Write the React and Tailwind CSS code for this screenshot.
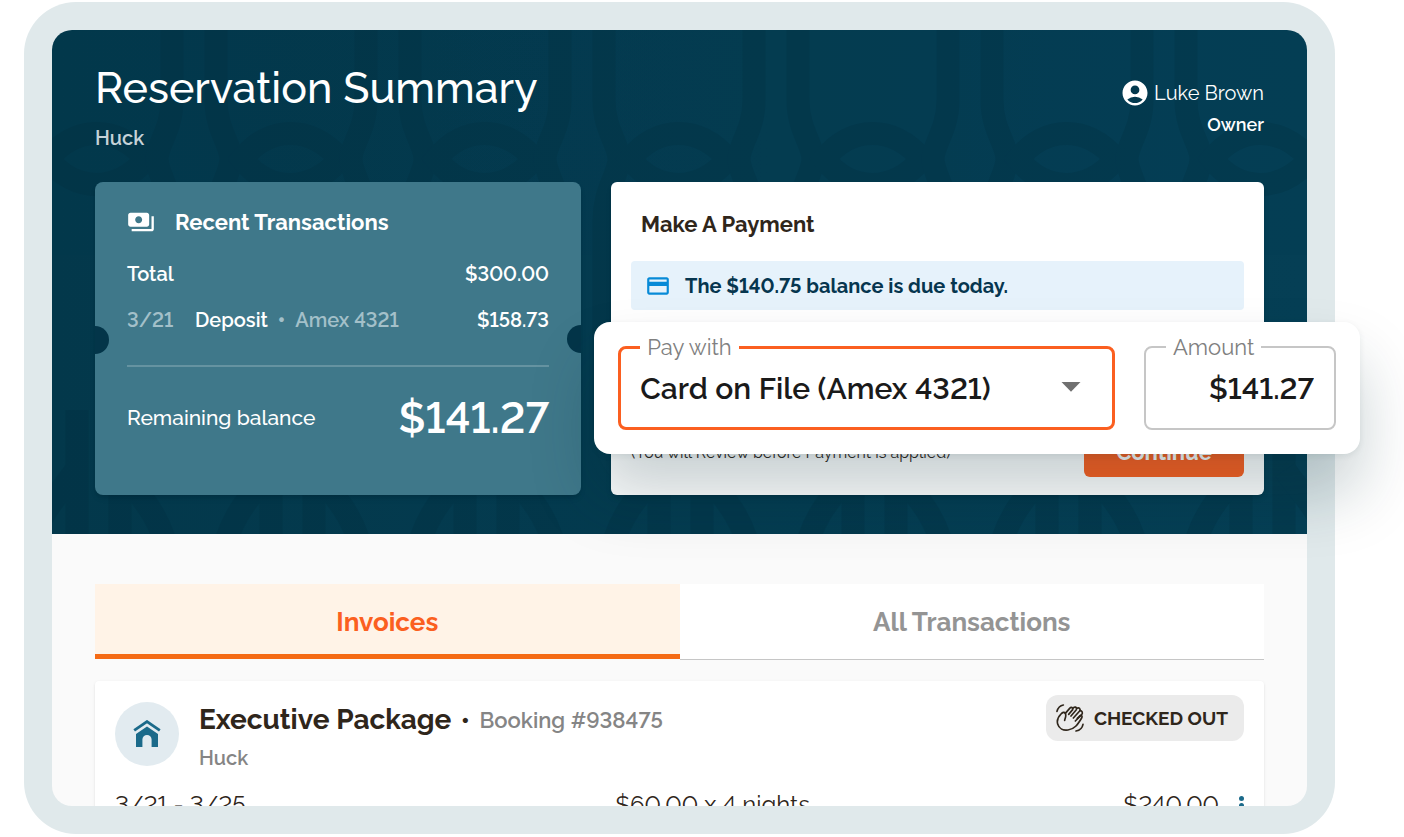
import { MdAccountCircle, MdCreditCard, MdPayments } from 'react-icons/md'

const columns = [-52, 142, 336, 530, 724, 918, 1112, 1306]

function HeaderPattern() {
  return (
    <svg
      className="absolute inset-0 w-full h-full text-[#022c3d] opacity-25"
      viewBox="0 0 1255 504"
      preserveAspectRatio="none"
      fill="none"
      stroke="currentColor"
      strokeWidth="23"
      aria-hidden="true"
    >
      {columns.map((x) => (
        <g key={x} transform={`translate(${x} 0)`}>
          {/* Strips that narrow above and below the rings */}
          <path d="M-22 -10V70C-22 100 -37 114 -37 129C-37 144 -22 160 -22 190V400" />
          <path d="M22 -10V70C22 100 37 114 37 129C37 144 22 160 22 190V400" />
          <path d="M48 129C75 95 117 95 146 129C117 163 75 163 48 129Z" />
          {/* Arches along the bottom edge */}
          <path d="M77 380V520M120 380V520" />
          <path d="M30 520C38 482 60 464 76 440M167 520C159 482 137 464 121 440" />
        </g>
      ))}
    </svg>
  )
}

function BarnIcon() {
  return (
    <svg className="w-7 h-7 text-[#1b6a8a]" viewBox="0 0 28 28" fill="none" aria-hidden="true">
      <path d="M1.2 10.4L14 1.6L26.8 10.4" stroke="currentColor" strokeWidth="2.8" />
      <path
        d="M14 6.4L25 14V27H18.6V19.5A4.6 4.6 0 0 0 9.4 19.5V27H3V14Z"
        fill="currentColor"
      />
    </svg>
  )
}

function WaveIcon() {
  return (
    <svg
      className="w-7 h-7"
      viewBox="0 0 84 84"
      fill="none"
      stroke="currentColor"
      strokeWidth="5"
      strokeLinecap="round"
      strokeLinejoin="round"
      aria-hidden="true"
    >
      <path d="M3 22C6 11 12 5 22 3" />
      <path d="M60 81C71 79 79 72 81 61" />
      <path d="M26 49C27 42 32 37 28 28C25 23 20 25 15 30C6 39 2 49 5 60C9 74 22 80 36 78C55 76 65 62 77 42C80 36 76 32 71 36L64 43" />
      <path d="M28 28L41 13C46 8 52 11 50 17L38 31" />
      <path d="M50 14C55 6 64 9 61 17L45 36" />
      <path d="M62 13C69 9 75 14 71 21L52 42" />
      <path d="M72 20C79 20 81 27 77 32L58 51" />
    </svg>
  )
}

function RecentTransactions() {
  return (
    <section className="relative overflow-hidden rounded-lg bg-[#3f788a] shadow-md px-8 pt-6 h-[313px]">
      <span className="absolute -left-3.5 top-36 w-7 h-7 rounded-full bg-[#033549]" />
      <span className="absolute -right-3.5 top-[143px] w-7 h-7 rounded-full bg-[#033549]" />

      <div className="flex items-center gap-5 h-8">
        <MdPayments className="w-7 h-7" />
        <h2 className="text-[22px] font-bold">Recent Transactions</h2>
      </div>
      <div className="flex items-center justify-between h-8 mt-5 text-xl font-semibold">
        <span>Total</span>
        <span>$300.00</span>
      </div>
      <div className="flex items-center h-8 mt-3.5 text-xl font-semibold">
        <span className="w-[68px] text-[#a3c0c9]">3/21</span>
        <span>Deposit</span>
        <span className="mx-2.5 font-black text-[#a3c0c9]">•</span>
        <span className="text-[#a3c0c9]">Amex 4321</span>
        <span className="ml-auto">$158.73</span>
      </div>
      <hr className="mt-[29px] border-t-2 border-[#6593a1]" />
      <div className="flex items-center justify-between h-12 mt-[27px]">
        <span className="text-[21px] font-medium">Remaining balance</span>
        <span className="text-[43px] font-semibold">$141.27</span>
      </div>
    </section>
  )
}

function MakePayment() {
  return (
    <section className="flex flex-col rounded-md bg-white shadow-md px-5 pt-[26px] pb-[18px] h-[313px]">
      <h2 className="h-8 px-2.5 text-[22px] leading-8 font-bold text-[#2f261b]">Make A Payment</h2>
      <div className="flex items-center gap-3.5 h-[49px] mt-[21px] px-3.5 rounded bg-[#e6f2fb]">
        <MdCreditCard className="w-[26px] h-[26px] text-[#078ad7]" />
        <p className="text-xl font-bold text-[#06364f]">The $140.75 balance is due today.</p>
      </div>
      <div className="flex items-center justify-between mt-auto">
        <p className="pt-0.5 text-base text-[#2f261b]">(You will Review before Payment is applied)</p>
        <button className="w-40 h-[50px] rounded-md bg-[#fc5f20] text-[22px] font-bold text-white">
          Continue
        </button>
      </div>
    </section>
  )
}

function PaymentFields() {
  return (
    <form className="absolute left-[43.5%] -right-[25px] top-80 flex gap-[29px] p-6 rounded-2xl bg-white shadow-[0_2px_6px_rgba(10,45,55,0.08),0_40px_64px_rgba(10,45,55,0.22)]">
      <div className="relative flex-1">
        <label htmlFor="pay-with" className="absolute left-[22px] -top-[15px] px-[7px] bg-white text-[22px] leading-8 text-[#808080]">
          Pay with
        </label>
        <select
          id="pay-with"
          className="w-full h-[84px] px-[19px] appearance-none rounded-lg border-3 border-[#fb5f20] bg-white text-[30px] font-semibold text-[#1a1a1a] outline-none"
        >
          <option>Card on File (Amex 4321)</option>
        </select>
        <svg className="absolute right-[34px] top-9 w-5 h-2.5 text-[#707070] pointer-events-none" viewBox="0 0 20 10" fill="currentColor" aria-hidden="true">
          <path d="M0.5 0H19.5L10 9.8Z" />
        </svg>
      </div>
      <div className="relative w-48">
        <label htmlFor="amount" className="absolute left-[22px] -top-[15px] px-[7px] bg-white text-[22px] leading-8 text-[#808080]">
          Amount
        </label>
        <input
          id="amount"
          defaultValue="$141.27"
          className="w-full h-[84px] px-5 rounded-lg border-2 border-[#c6c6c6] bg-white text-right text-[30px] font-semibold text-[#1a1a1a] outline-none"
        />
      </div>
    </form>
  )
}

function Invoice() {
  return (
    <article className="mt-[21px] px-5 pt-[14px] rounded bg-white shadow text-[#2f261b]">
      <div className="flex items-start">
        <span className="flex items-center justify-center w-16 h-16 mt-[7px] rounded-full bg-[#e2ebf0] shrink-0">
          <BarnIcon />
        </span>
        <div className="ml-5 pt-[5px]">
          <div className="flex items-center gap-2.5 h-10">
            <h3 className="text-[28px] font-bold">Executive Package</h3>
            <span className="text-[22px] font-black">•</span>
            <span className="text-[22px] font-semibold text-[#858585]">Booking #938475</span>
          </div>
          <p className="h-8 mt-0.5 text-xl leading-8 text-[#858585] font-semibold">Huck</p>
        </div>
        <span className="flex items-center gap-2.5 h-[46px] ml-auto pl-2.5 pr-4 rounded-xl bg-[#ebebeb] text-[19px] font-bold">
          <WaveIcon />
          CHECKED OUT
        </span>
      </div>
      <div className="grid grid-cols-[1fr_1fr_auto] h-12 mt-[13px] text-2xl leading-9">
        <span>3/21 - 3/25</span>
        <span className="-ml-1">$60.00 x 4 nights</span>
        <span className="flex gap-5">
          $240.00
          <button aria-label="Invoice actions" className="w-[5px] pt-[9px] flex flex-col gap-0.5">
            <i className="w-[5px] h-[5px] rounded-full bg-[#1b6a8a]" />
            <i className="w-[5px] h-[5px] rounded-full bg-[#1b6a8a]" />
            <i className="w-[5px] h-[5px] rounded-full bg-[#1b6a8a]" />
          </button>
        </span>
      </div>
    </article>
  )
}

export default function App() {
  return (
    <div className="h-screen overflow-hidden bg-white pl-6 pr-[69px] pt-0.5 pb-[3px] font-[Raleway,Inter,sans-serif] lining-nums">
      <div className="relative h-full rounded-[52px] bg-[#e0e9eb] p-7">
        <div className="h-full overflow-hidden rounded-[20px] bg-[#fafafa]">
          {/* Header */}
          <header className="relative h-[504px] px-[43px] pt-8 bg-linear-to-r from-[#03384b] to-[#053f55] text-white">
            <HeaderPattern />
            <div className="relative flex justify-between h-[120px]">
              <div>
                <h1 className="text-[43px] leading-[52px] font-medium">Reservation Summary</h1>
                <p className="mt-2 text-xl leading-8 font-semibold text-[#c5d2d8]">Huck</p>
              </div>
              <div className="pt-[15px] text-right">
                <div className="flex items-center gap-1 h-8 text-xl">
                  <MdAccountCircle className="w-[30px] h-[30px]" />
                  Luke Brown
                </div>
                <p className="text-lg leading-8 font-semibold">Owner</p>
              </div>
            </div>
            <div className="relative grid grid-cols-[486fr_653fr] gap-[30px]">
              <RecentTransactions />
              <MakePayment />
            </div>
          </header>

          {/* Invoices */}
          <main className="px-[43px] pt-[50px]">
            <div role="tablist" className="flex h-[76px] text-[26px] font-bold">
              <button role="tab" aria-selected="true" className="flex-1 mb-px pt-1.5 border-b-[5px] border-[#f56a14] bg-[#fff3e7] text-[#fb5f20]">
                Invoices
              </button>
              <button role="tab" aria-selected="false" className="flex-1 pt-0.5 border-b border-[#c6c6c6] bg-white text-[#949494]">
                All Transactions
              </button>
            </div>
            <Invoice />
          </main>
        </div>

        <PaymentFields />
      </div>
    </div>
  )
}
